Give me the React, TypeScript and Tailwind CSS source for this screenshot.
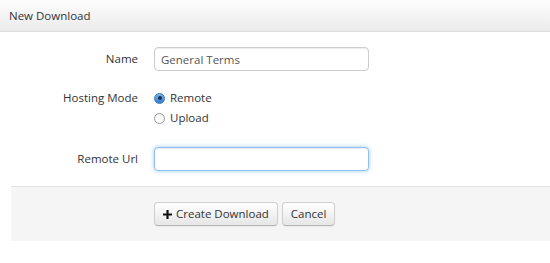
import React, { useState } from 'react';

const Radio: React.FC<{ checked: boolean; label: string; onClick: () => void }> = ({ checked, label, onClick }) => (
    <label onClick={onClick} className="flex items-center h-[20px] cursor-pointer">
        <span
            className={
                checked
                    ? "w-[11px] h-[11px] rounded-full border border-[#3a79b8] bg-gradient-to-b from-[#7fb6ea] to-[#2f7bd0] flex items-center justify-center"
                    : "w-[11px] h-[11px] rounded-full border border-[#9a9a9a] bg-gradient-to-b from-[#f4f4f4] to-[#ffffff]"
            }
        >
            {checked && <span className="w-[4px] h-[4px] rounded-full bg-[#1b2f4a]" />}
        </span>
        <span className="ml-[5px]">{label}</span>
    </label>
);

export default function App() {
    const [name, setName] = useState('General Terms');
    const [mode, setMode] = useState<'remote' | 'upload'>('remote');
    const [url, setUrl] = useState('');

    const inputClasses = "w-[215px] h-[24px] px-[6px] border border-[#cccccc] rounded-[4px] shadow-[inset_0_1px_1px_rgba(0,0,0,0.075)] text-[11.5px] text-[#555] outline-none bg-white";
    const btnClasses = "h-[24px] px-[8px] flex items-center rounded-[4px] border border-[#cfcfcf] border-b-[#b3b3b3] bg-gradient-to-b from-[#ffffff] to-[#e6e6e6] shadow-[inset_0_1px_0_rgba(255,255,255,0.2),0_1px_2px_rgba(0,0,0,0.05)] text-[11.5px] text-[#333]";

    return (
        <div className="w-[550px] h-[263px] bg-white font-['Open_Sans',sans-serif] text-[11.5px] text-[#333] overflow-hidden">
            <div className="h-[32px] border-b border-[#dddddd] bg-gradient-to-b from-[#fdfdfd] to-[#ebebeb] px-[9px] flex items-center">
                New Download
            </div>

            <form onSubmit={e => e.preventDefault()} className="pt-[15px]">
                <div className="flex items-center">
                    <label className="w-[138px] text-right">Name</label>
                    <input value={name} onChange={e => setName(e.target.value)} className={`ml-[16px] ${inputClasses}`} />
                </div>

                <div className="flex items-start mt-[17px]">
                    <label className="w-[138px] text-right leading-[20px]">Hosting Mode</label>
                    <div className="ml-[16px] flex flex-col">
                        <Radio checked={mode === 'remote'} label="Remote" onClick={() => setMode('remote')} />
                        <Radio checked={mode === 'upload'} label="Upload" onClick={() => setMode('upload')} />
                    </div>
                </div>

                <div className="flex items-center mt-[19px]">
                    <label className="w-[138px] text-right">Remote Url</label>
                    <input
                        value={url}
                        onChange={e => setUrl(e.target.value)}
                        className="ml-[16px] w-[215px] h-[24px] px-[6px] border border-[#8fc1f0] rounded-[4px] shadow-[inset_0_1px_1px_rgba(0,0,0,0.075),0_0_4px_rgba(82,168,236,0.6)] text-[11.5px] text-[#555] outline-none bg-white"
                    />
                </div>

                <div className="mt-[15px] ml-[11px] h-[55px] bg-[#f5f5f5] border-t border-[#e5e5e5] pt-[15px] pl-[143px] flex items-start gap-[4px]">
                    <button type="submit" className={`${btnClasses} gap-[4px]`}>
                        <svg width="9" height="9" viewBox="0 0 9 9">
                            <path d="M4.5 0v9M0 4.5h9" stroke="#111" strokeWidth="2.2" />
                        </svg>
                        Create Download
                    </button>
                    <button type="button" className={btnClasses}>
                        Cancel
                    </button>
                </div>
            </form>
        </div>
    );
}
